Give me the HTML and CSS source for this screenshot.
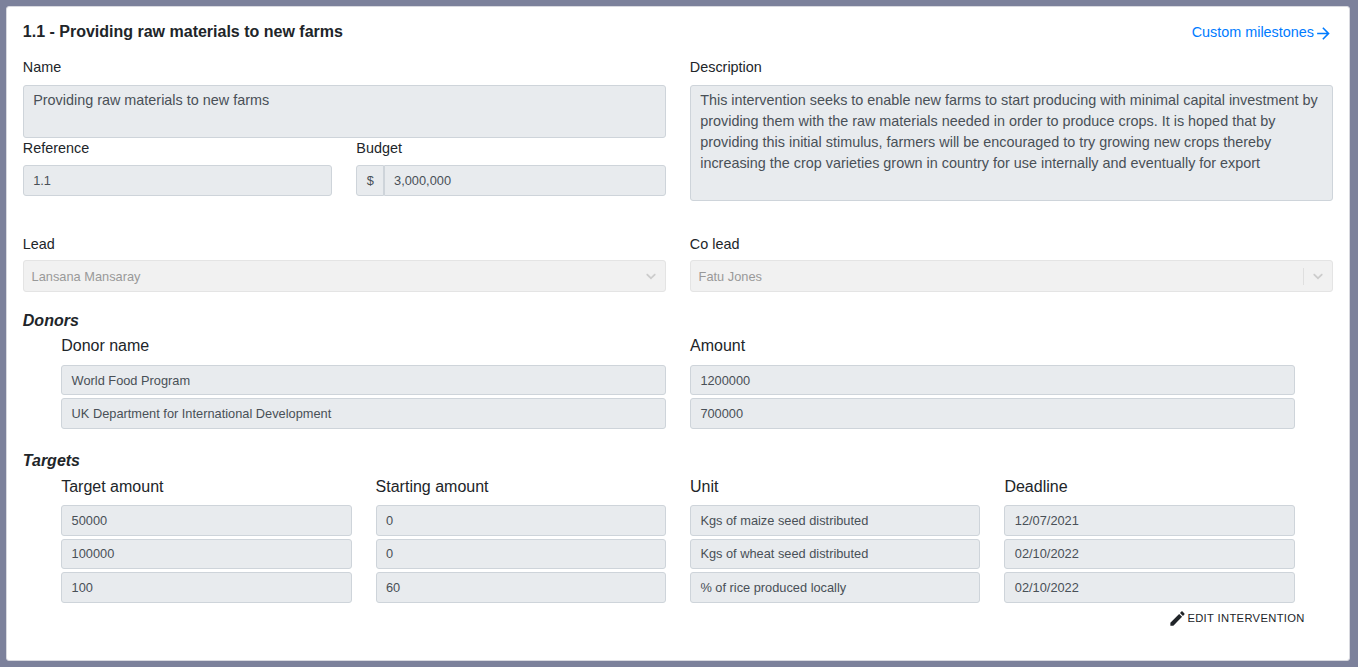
FILE: index.html
```
<!DOCTYPE html>
<html lang="en">
<head>
<meta charset="utf-8">
<title>Intervention</title>
<link rel="stylesheet" href="styles.css">
</head>
<body>
<main class="card">
  <header class="card-header">
    <h1 class="title">1.1 - Providing raw materials to new farms</h1>
    <a class="milestones">Custom milestones<svg class="arrow" viewBox="0 0 24 24"><path d="M12 4l-1.41 1.41L16.17 11H4v2h12.17l-5.58 5.59L12 20l8-8z"/></svg></a>
  </header>

  <section class="halves details">
    <div>
      <div class="label">Name</div>
      <div class="area name">Providing raw materials to new farms</div>
      <div class="halves">
        <div>
          <div class="label label-ref">Reference</div>
          <div class="field">1.1</div>
        </div>
        <div>
          <div class="label label-ref">Budget</div>
          <div class="group"><span class="field prefix">$</span><span class="field amount">3,000,000</span></div>
        </div>
      </div>
    </div>
    <div>
      <div class="label">Description</div>
      <div class="area description">This intervention seeks to enable new farms to start producing with minimal capital investment by providing them with the raw materials needed in order to produce crops. It is hoped that by providing this initial stimulus, farmers will be encouraged to try growing new crops thereby increasing the crop varieties grown in country for use internally and eventually for export</div>
    </div>
  </section>

  <section class="halves leads">
    <div>
      <div class="label label-lead">Lead</div>
      <div class="select"><span>Lansana Mansaray</span><svg class="chevron" viewBox="0 0 20 20"><path d="M4.516 7.548c0.436-0.446 1.043-0.481 1.576 0l3.908 3.747 3.908-3.747c0.533-0.481 1.141-0.446 1.574 0 0.436 0.445 0.408 1.197 0 1.615-0.406 0.418-4.695 4.502-4.695 4.502-0.217 0.223-0.502 0.335-0.787 0.335s-0.57-0.112-0.789-0.335c0 0-4.287-4.084-4.695-4.502s-0.436-1.17 0-1.615z"/></svg></div>
    </div>
    <div>
      <div class="label label-lead">Co lead</div>
      <div class="select"><span>Fatu Jones</span><i class="separator"></i><svg class="chevron" viewBox="0 0 20 20"><path d="M4.516 7.548c0.436-0.446 1.043-0.481 1.576 0l3.908 3.747 3.908-3.747c0.533-0.481 1.141-0.446 1.574 0 0.436 0.445 0.408 1.197 0 1.615-0.406 0.418-4.695 4.502-4.695 4.502-0.217 0.223-0.502 0.335-0.787 0.335s-0.57-0.112-0.789-0.335c0 0-4.287-4.084-4.695-4.502s-0.436-1.17 0-1.615z"/></svg></div>
    </div>
  </section>

  <h2 class="heading">Donors</h2>
  <section class="table donors">
    <div class="column-title">Donor name</div>
    <div class="column-title">Amount</div>
    <div class="field">World Food Program</div>
    <div class="field">1200000</div>
    <div class="field">UK Department for International Development</div>
    <div class="field">700000</div>
  </section>

  <h2 class="heading">Targets</h2>
  <section class="table targets">
    <div class="column-title">Target amount</div>
    <div class="column-title">Starting amount</div>
    <div class="column-title">Unit</div>
    <div class="column-title">Deadline</div>
    <div class="field">50000</div>
    <div class="field">0</div>
    <div class="field">Kgs of maize seed distributed</div>
    <div class="field">12/07/2021</div>
    <div class="field middle">100000</div>
    <div class="field middle">0</div>
    <div class="field middle">Kgs of wheat seed distributed</div>
    <div class="field middle">02/10/2022</div>
    <div class="field">100</div>
    <div class="field">60</div>
    <div class="field">% of rice produced locally</div>
    <div class="field">02/10/2022</div>
  </section>

  <footer class="actions">
    <div class="edit"><svg class="pencil" viewBox="0 0 24 24"><path d="M3 17.25V21h3.75L17.81 9.94l-3.75-3.75L3 17.25zM20.71 7.04c.39-.39.39-1.02 0-1.41l-2.34-2.34c-.39-.39-1.02-.39-1.41 0l-1.83 1.83 3.75 3.75 1.83-1.83z"/></svg>EDIT INTERVENTION</div>
  </footer>
</main>
</body>
</html>
```
FILE: styles.css
```
* {
  box-sizing: border-box;
}

body {
  margin: 0;
  height: 667px;
  padding: 6px 8px 6px 6px;
  background: #7c819b;
  color: #212529;
  font-family: "Liberation Sans", Arial, sans-serif;
  overflow: hidden;
}

.card {
  height: 655px;
  padding: 13px 16.2px 0 15.8px;
  background: #fff;
  border: 1px solid #d8d9df;
  border-radius: 3px;
}

.card-header {
  display: flex;
  justify-content: space-between;
  height: 36.5px;
}

.title {
  margin: 0;
  font-size: 16px;
  line-height: 24px;
}

.milestones {
  display: flex;
  align-items: center;
  height: 24px;
  color: #007bff;
  font-size: 14.4px;
}

.arrow {
  width: 18.8px;
  height: 19px;
  margin-top: 2px;
  fill: #007bff;
}

.halves {
  display: grid;
  grid-template-columns: 1fr 1fr;
  column-gap: 24px;
}

.details {
  height: 177px;
}

.leads {
  height: 75.5px;
}

.label {
  height: 28.5px;
  font-size: 14.4px;
  line-height: 21.6px;
}

.label-ref {
  height: 27.3px;
}

.label-lead {
  height: 26.5px;
}

.area {
  padding: 4px 9.4px;
  background: #e8ebee;
  border: 1px solid #ced4da;
  border-radius: 3px;
  color: #495057;
  font-size: 14.4px;
  line-height: 21px;
}

.name {
  height: 53px;
}

.description {
  height: 116px;
}

.field {
  height: 30.4px;
  padding: 0 9.4px;
  background: #e8ebee;
  border: 1px solid #ced4da;
  border-radius: 3px;
  color: #495057;
  font-size: 12.8px;
  line-height: 29px;
  white-space: nowrap;
}

.middle {
  line-height: 28.3px;
}

.group {
  display: flex;
}

.prefix {
  width: 27.4px;
  border-radius: 3px 0 0 3px;
}

.amount {
  flex: 1;
  border-radius: 0 3px 3px 0;
}

.select {
  display: flex;
  align-items: center;
  height: 32px;
  padding: 0 6px 0 7.8px;
  background: #f1f1f1;
  border: 1px solid #e4e4e4;
  border-radius: 3px;
  color: #999;
  font-size: 12.8px;
}

.select span {
  flex: 1;
}

.separator {
  width: 1px;
  height: 17px;
  margin-right: 6px;
  background: #dfdfdf;
}

.chevron {
  width: 16px;
  height: 16px;
  fill: #ccc;
}

.heading {
  margin: 0;
  height: 25px;
  font-size: 16px;
  font-style: italic;
  line-height: 24px;
}

.table {
  display: grid;
  grid-auto-rows: 30.4px;
  gap: 3px 24px;
  padding: 0 38px 0 38.4px;
}

.donors {
  height: 115px;
  grid-template: 28.05px / 1fr 1fr;
}

.targets {
  height: 130px;
  grid-template: 28.4px / repeat(4, 1fr);
}

.column-title {
  font-size: 16px;
  line-height: 24px;
}

.targets .column-title {
  line-height: 26px;
}

.actions {
  display: flex;
  justify-content: flex-end;
  padding-right: 28px;
}

.edit {
  display: flex;
  align-items: center;
  height: 28px;
  font-size: 11.2px;
  letter-spacing: 0.35px;
}

.pencil {
  width: 19px;
  height: 19px;
  fill: #212529;
}
```
